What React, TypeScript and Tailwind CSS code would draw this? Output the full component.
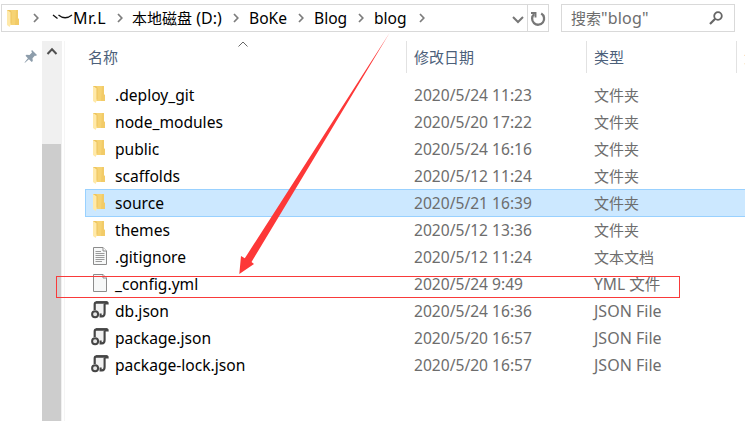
import React from "react";

type Kind = "folder" | "text" | "blank" | "json";

const files: { name: string; date: string; type: string; kind: Kind; selected?: boolean }[] = [
  { name: ".deploy_git", date: "2020/5/24 11:23", type: "文件夹", kind: "folder" },
  { name: "node_modules", date: "2020/5/20 17:22", type: "文件夹", kind: "folder" },
  { name: "public", date: "2020/5/24 16:16", type: "文件夹", kind: "folder" },
  { name: "scaffolds", date: "2020/5/12 11:24", type: "文件夹", kind: "folder" },
  { name: "source", date: "2020/5/21 16:39", type: "文件夹", kind: "folder", selected: true },
  { name: "themes", date: "2020/5/12 13:36", type: "文件夹", kind: "folder" },
  { name: ".gitignore", date: "2020/5/12 11:24", type: "文本文档", kind: "text" },
  { name: "_config.yml", date: "2020/5/24 9:49", type: "YML 文件", kind: "blank" },
  { name: "db.json", date: "2020/5/24 16:36", type: "JSON File", kind: "json" },
  { name: "package.json", date: "2020/5/20 16:57", type: "JSON File", kind: "json" },
  { name: "package-lock.json", date: "2020/5/20 16:57", type: "JSON File", kind: "json" },
];

function FolderIcon() {
  return (
    <svg width="12" height="18" viewBox="0 0 12 18" className="shrink-0">
      <path d="M0 1H11V9.5L12 10V16H2L0 15Z" fill="#f6d374" />
      <path d="M9 1H11V9.5L12 10V16H8Z" fill="#f2cb68" />
      <path d="M0 1L3.7 3.2V15.5L2.6 18L0 16Z" fill="#ffe9a9" />
      <path d="M0 1H3L4.5 3V14.5H3.6V3.2Z" fill="#edc45f" />
    </svg>
  );
}

function DocIcon({ lines }: { lines: boolean }) {
  return (
    <svg width="14" height="18" viewBox="0 0 14 18" className="shrink-0">
      <path d="M.5 .5H10L13.5 4V17.5H.5Z" fill="#f7f8f8" stroke="#8c8c8c" />
      <path d="M10 .5V4H13.5" fill="#fff" stroke="#8c8c8c" />
      {lines && <path d="M2.5 4.5H8M2.5 6.5H11.5M2.5 8.5H11.5M2.5 10.5H11.5M2.5 12.5H11.5M2.5 14.5H9" stroke="#9b9b9b" />}
    </svg>
  );
}

function JsonIcon() {
  return (
    <svg width="18" height="18" viewBox="0 0 18 18" className="shrink-0">
      <path d="M4.5 2H14V15H8L4.5 10Z" fill="#f1f1f1" />
      <path d="M3.7 9V3.2Q3.7 1.4 5.6 1.4H16" fill="none" stroke="#454545" strokeWidth="2.2" />
      <path d="M5 .3H16.4Q18 .8 17.7 3.4H14L13.3 2.6H5Z" fill="#454545" />
      <path d="M13.6 3V12Q13.6 15.4 11 15.4H9.6V12.6" fill="none" stroke="#454545" strokeWidth="2.1" />
      <circle cx="4.1" cy="13.3" r="3" fill="#e6e6e6" stroke="#454545" strokeWidth="2" />
    </svg>
  );
}

const icons: Record<Kind, React.ReactNode> = {
  folder: <FolderIcon />,
  text: <DocIcon lines />,
  blank: <DocIcon lines={false} />,
  json: <JsonIcon />,
};

function Chevron() {
  return (
    <svg width="6" height="10" viewBox="0 0 6 10" className="shrink-0">
      <path d="M1 1L4.8 5L1 9" fill="none" stroke="#7d7d7d" strokeWidth="1.7" />
    </svg>
  );
}

export default function App() {
  return (
    <div className="relative flex h-[421px] w-[745px] flex-col overflow-hidden bg-white font-['Noto_Sans','Noto_Sans_CJK_SC',sans-serif] text-[15px] leading-[26px] whitespace-nowrap text-black">
      <div className="flex h-[41px] pt-1 pl-px">
        <div className="flex h-7 w-[548px] border border-[#d9d9d9]">
          <div className="flex w-[525px] items-center pl-[5px]">
            <div className="w-[26px]"><FolderIcon /></div>
            <div className="w-[19px]"><Chevron /></div>
            <svg width="21" height="6" viewBox="0 0 21 6" className="mb-[3px] shrink-0">
              <path d="M1 1L5.5 4.5M6.5 1Q13 6.5 20 1" fill="none" stroke="#111" strokeWidth="1.3" />
            </svg>
            <div className="w-[44px] text-[16px] tracking-[0.5px]">Mr.L</div>
            <div className="w-[15px]"><Chevron /></div>
            <div className="w-[101px]">本地磁盘<span className="text-[16px]"> (D:)</span></div>
            <div className="w-[16px]"><Chevron /></div>
            <div className="w-[49px] text-[15.6px]">BoKe</div>
            <div className="w-[16px]"><Chevron /></div>
            <div className="w-[44px] text-[15.6px]">Blog</div>
            <div className="w-[16px]"><Chevron /></div>
            <div className="w-[45px] text-[15.6px]">blog</div>
            <Chevron />
            <svg width="12" height="8" viewBox="0 0 12 8" className="mt-[3px] mr-[3px] ml-auto shrink-0">
              <path d="M1 1L6 6L11 1" fill="none" stroke="#777" strokeWidth="2" />
            </svg>
          </div>
          <div className="flex flex-1 items-center justify-center border-l border-[#d9d9d9]">
            <svg width="16" height="16" viewBox="0 0 16 16" className="mt-px">
              <path d="M11.2 2.6A6 6 0 1 1 4.2 3.2" fill="none" stroke="#777" strokeWidth="2.3" />
              <path d="M1 2H5.5V6.5" fill="none" stroke="#777" strokeWidth="1.9" />
            </svg>
          </div>
        </div>
        <div className="ml-3 flex h-7 w-[174px] items-center justify-between border border-[#d9d9d9] pr-[11px] pl-[9px] text-[#6d6d6d]">
          <span>搜索<span className="text-[16px] tracking-[0.2px]">"blog"</span></span>
          <svg width="14" height="14" viewBox="0 0 14 14">
            <circle cx="9" cy="5" r="3.8" fill="none" stroke="#666" strokeWidth="1.8" />
            <path d="M6.2 7.8L1 13" stroke="#666" strokeWidth="2.2" />
          </svg>
        </div>
      </div>
      <div className="flex flex-1">
        <div className="w-[42px] pt-[9px] pl-[24px]">
          <svg width="14" height="14" viewBox="0 0 14 14">
            <path d="M8 0L13 5L11.8 6L11 5.6L8.5 8.3L8.8 11L7.7 12L4.9 9.2L1 12.8L.5 12.5L3.9 8.2L1.5 5.8L2.5 4.7L5.5 5L8 2.5L7.3 1Z" fill="#8d9dab" />
          </svg>
        </div>
        <div className="flex w-5 flex-col bg-[#f0f0f0]">
          <div className="h-[103px] pt-[6px] pl-[4px]">
            <svg width="12" height="9" viewBox="0 0 12 9">
              <path d="M1.5 7L6 2.2L10.5 7" fill="none" stroke="#505050" strokeWidth="2" />
            </svg>
          </div>
          <div className="w-[19px] flex-1 bg-[#cdcdcd]" />
        </div>
        <div className="ml-[2px] w-[21px] border-l border-[#f5f5f5]" />
        <div className="flex w-[660px] shrink-0 flex-col overflow-hidden">
          <div className="flex h-8 shrink-0 items-center text-[#4c607a]">
            <div className="flex w-[321px] shrink-0 justify-between self-stretch pl-[3px]">
              <span className="self-center">名称</span>
              <svg width="10" height="6" viewBox="0 0 10 6" className="mr-[158px]">
                <path d="M.5 5.5L5 1L9.5 5.5" fill="none" stroke="#666" />
              </svg>
            </div>
            <div className="flex w-[180px] shrink-0 items-center self-stretch border-l border-[#e2e2e2] pl-[7px]">修改日期</div>
            <div className="flex w-[150px] shrink-0 items-center self-stretch border-l border-[#e2e2e2] pl-[7px]">类型</div>
            <div className="flex shrink-0 items-center self-stretch border-l border-[#e2e2e2] pl-[7px]">大小</div>
          </div>
          <div className="mt-2 flex flex-col text-[15.6px]">
            {files.map((f) => (
              <div
                key={f.name}
                className={
                  "-mb-px flex h-7 items-center border border-r-0 pl-[5px] " +
                  (f.selected ? "border-[#99d1ff] bg-[#cce8ff]" : "border-transparent")
                }
              >
                <div className={"flex w-[24px] -translate-y-px " + (f.kind === "json" ? "" : "pl-[2px]")}>{icons[f.kind]}</div>
                <div className="w-[299px]">{f.name}</div>
                <div className="w-[180px] text-[#6d6d6d]">{f.date}</div>
                <div className={"text-[#6d6d6d] " + (f.kind === "json" ? "text-[16px]" : f.kind === "blank" ? "text-[15.6px]" : "text-[15px]")}>{f.type}</div>
              </div>
            ))}
          </div>
        </div>
      </div>
      <div className="pointer-events-none absolute top-[276px] left-[56px] h-[22px] w-[624px] border border-[#f93a3a]" />
      <svg width="160" height="245" viewBox="0 0 160 245" className="pointer-events-none absolute top-[32px] left-[236px]">
        <path d="M153.5 1L15.5 230L18 232L3.3 242L5 224L8.8 226.3Z" fill="#fd3838" />
      </svg>
    </div>
  );
}
